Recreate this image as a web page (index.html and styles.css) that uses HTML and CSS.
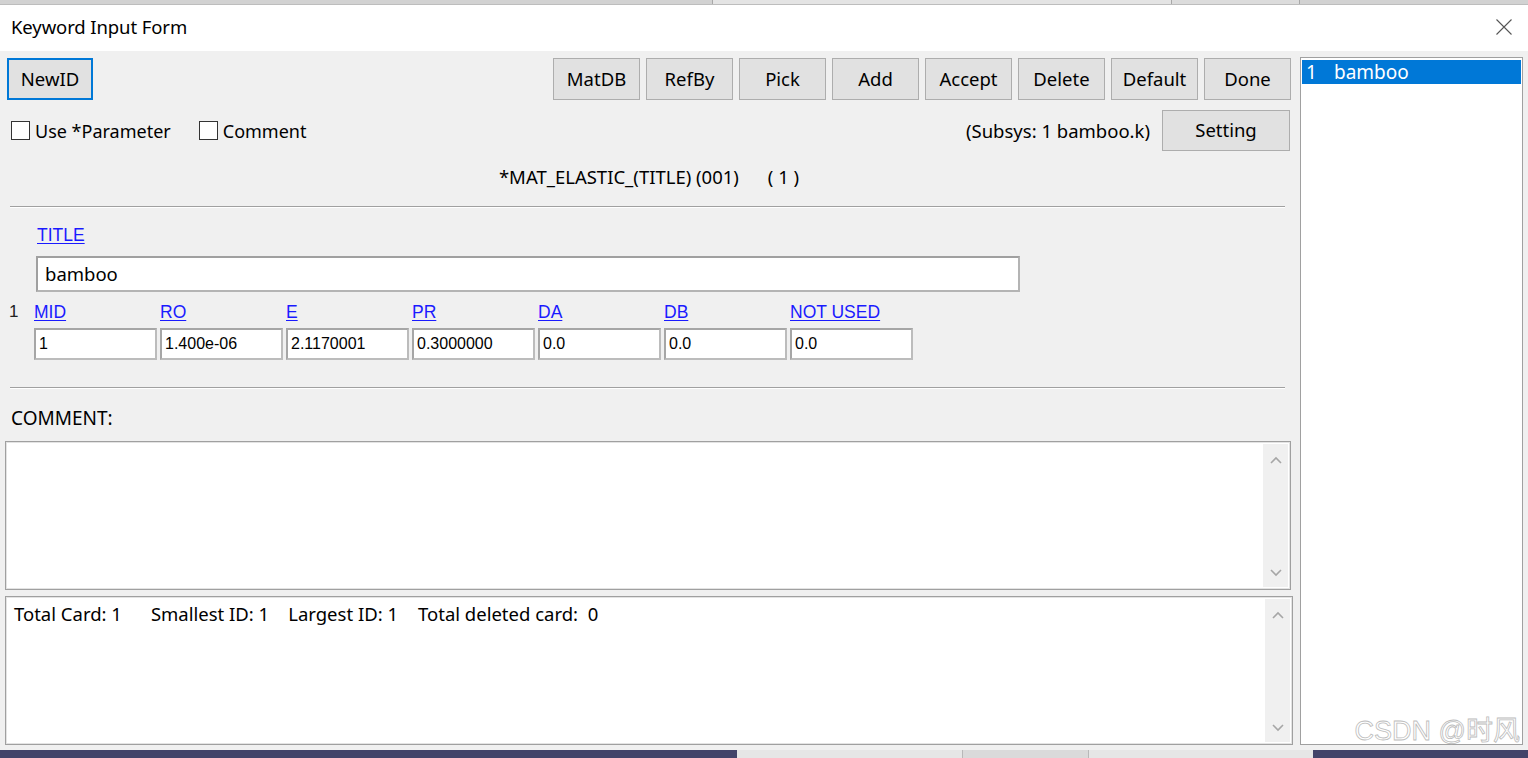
FILE: index.html
```html
<!DOCTYPE html>
<html lang="en">
<head>
  <meta charset="UTF-8" />
  <title>Keyword Input Form</title>
  <link rel="stylesheet" href="styles.css">
</head>
<body>
  <div class="desk-strip">
    <div class="strip-a"></div>
    <div class="strip-combo"></div>
    <div class="strip-btn"></div>
    <div class="strip-c"></div>
  </div>

  <div class="dialog">
    <div class="titlebar">
      <span class="title">Keyword Input Form</span>
      <svg class="close" width="16" height="16" viewBox="0 0 16 16">
        <path d="M0.5 0.5 L15.5 15.5 M15.5 0.5 L0.5 15.5" stroke="#555" stroke-width="1.1" fill="none" />
      </svg>
    </div>

    <div class="client">
      <div class="form">
        <div class="toolbar">
          <button class="btn btn-focus">NewID</button>
          <div class="btn-group">
            <button class="btn">MatDB</button>
            <button class="btn">RefBy</button>
            <button class="btn">Pick</button>
            <button class="btn">Add</button>
            <button class="btn">Accept</button>
            <button class="btn">Delete</button>
            <button class="btn">Default</button>
            <button class="btn">Done</button>
          </div>
        </div>

        <div class="options">
          <label class="check"><span class="box"></span>Use *Parameter</label>
          <label class="check check-2"><span class="box"></span>Comment</label>
          <span class="subsys">(Subsys: 1 bamboo.k)</span>
          <button class="btn btn-setting">Setting</button>
        </div>

        <div class="kw-head">*MAT_ELASTIC_(TITLE) (001)&nbsp;&nbsp;&nbsp;&nbsp;&nbsp; ( 1 )</div>

        <div class="sep"></div>

        <a class="field-link title-link" href="#">TITLE</a>
        <div class="title-input">bamboo</div>

        <div class="card-row">
          <span class="card-no">1</span>
          <div class="card-grid">
            <div class="cell"><a class="field-link" href="#">MID</a><div class="val">1</div></div>
            <div class="cell"><a class="field-link" href="#">RO</a><div class="val">1.400e-06</div></div>
            <div class="cell"><a class="field-link" href="#">E</a><div class="val">2.1170001</div></div>
            <div class="cell"><a class="field-link" href="#">PR</a><div class="val">0.3000000</div></div>
            <div class="cell"><a class="field-link" href="#">DA</a><div class="val">0.0</div></div>
            <div class="cell"><a class="field-link" href="#">DB</a><div class="val">0.0</div></div>
            <div class="cell"><a class="field-link" href="#">NOT USED</a><div class="val">0.0</div></div>
          </div>
        </div>

        <div class="sep sep-2"></div>

        <div class="comment-label">COMMENT:</div>

        <div class="textbox comment-box">
          <div class="textbox-body"></div>
          <div class="vscroll">
            <svg width="12" height="8" viewBox="0 0 12 8"><polyline points="1,7 6,2 11,7" fill="none" stroke="#a6a6a6" stroke-width="1.6" /></svg>
            <svg width="12" height="8" viewBox="0 0 12 8"><polyline points="1,1 6,6 11,1" fill="none" stroke="#a6a6a6" stroke-width="1.6" /></svg>
          </div>
        </div>

        <div class="textbox status-box">
          <div class="textbox-body status-text"><span class="st st-1">Total Card: 1</span><span class="st st-2">Smallest ID: 1</span><span class="st st-3">Largest ID: 1</span><span class="st st-4">Total deleted card:&nbsp; 0</span></div>
          <div class="vscroll">
            <svg width="12" height="8" viewBox="0 0 12 8"><polyline points="1,7 6,2 11,7" fill="none" stroke="#a6a6a6" stroke-width="1.6" /></svg>
            <svg width="12" height="8" viewBox="0 0 12 8"><polyline points="1,1 6,6 11,1" fill="none" stroke="#a6a6a6" stroke-width="1.6" /></svg>
          </div>
        </div>
      </div>

      <div class="id-list">
        <div class="id-row selected"><span class="id-no">1</span><span>bamboo</span></div>
      </div>
    </div>
  </div>

  <div class="taskbar">
    <div class="task-dark task-left"></div>
    <div class="task-light">
      <div class="task-btn"></div>
    </div>
    <div class="task-dark task-right"></div>
  </div>

  <div class="watermark">CSDN @时风</div>
</body>
</html>
```

FILE: styles.css
```css
:root {
  --face: #f0f0f0;
  --btn-face: #e1e1e1;
  --btn-border: #adadad;
  --focus-blue: #0078d7;
  --link-blue: #1a1aff;
  --ui-font: "Noto Sans", "Open Sans", sans-serif;
  --field-font: "Liberation Sans", Arial, sans-serif;
}

* {
  box-sizing: border-box;
  margin: 0;
  padding: 0;
}

html, body {
  width: 1528px;
  height: 758px;
  overflow: hidden;
}

body {
  position: relative;
  font-family: var(--ui-font);
  color: #000;
  background: var(--face);
}

/* window behind the dialog, only a few px visible */
.desk-strip {
  height: 5px;
  display: flex;
  background: #d2d2d2;
  border-bottom: 1px solid #bdbdbd;
}

.strip-a { width: 712px; }
.strip-combo { width: 460px; background: #e4e4e4; border-left: 1px solid #a8a8a8; border-right: 1px solid #a8a8a8; }
.strip-btn { width: 128px; background: #dcdcdc; border-right: 1px solid #a8a8a8; }
.strip-c { flex: 1; }

.dialog {
  display: flex;
  flex-direction: column;
}

.titlebar {
  height: 46px;
  background: #fff;
  display: flex;
  align-items: center;
  justify-content: space-between;
  padding: 0 16px 4px 11px;
}

.title {
  font-size: 18.5px;
  letter-spacing: -0.1px;
}

.close {
  margin-top: 1px;
}

.client {
  height: 699px;
  display: flex;
  gap: 7px;
  padding: 6px 5px 5px 5px;
  background: var(--face);
}

.form {
  width: 1288px;
  display: flex;
  flex-direction: column;
}

.btn {
  font-family: var(--ui-font);
  font-size: 18.5px;
  color: #000;
  background: var(--btn-face);
  border: 1px solid var(--btn-border);
  height: 42px;
  width: 87px;
  padding: 0 0 2px;
}

.toolbar {
  margin-top: 1px;
  display: flex;
  justify-content: space-between;
  padding: 0 2px;
}

.btn-focus {
  width: 86px;
  border: 2px solid var(--focus-blue);
}

.btn-group {
  display: flex;
  gap: 6px;
}

.options {
  margin-top: 10px;
  height: 41px;
  display: flex;
  align-items: center;
  padding: 0 3px 0 6px;
}

.check {
  display: flex;
  align-items: center;
  gap: 5px;
  font-size: 18px;
}

.check-2 {
  margin-left: 28px;
}

.box {
  width: 19px;
  height: 19px;
  background: #fff;
  border: 1px solid #333;
}

.subsys {
  margin-left: auto;
  margin-right: 12px;
  font-size: 18.5px;
}

.btn-setting {
  width: 128px;
  height: 41px;
}

.kw-head {
  margin-top: 14px;
  line-height: 24px;
  font-size: 18.5px;
  text-align: center;
}

.sep {
  margin: 17px 8px 0 5px;
  height: 2px;
  border-top: 1px solid #a0a0a0;
  border-bottom: 1px solid #fff;
}

.sep-2 {
  margin-top: 27px;
}

.field-link {
  font-family: var(--field-font);
  font-size: 17.5px;
  line-height: 20px;
  color: var(--link-blue);
  text-decoration: underline;
  text-underline-offset: 2px;
}

.title-link {
  margin: 17px 0 0 32px;
  align-self: flex-start;
}

.title-input {
  margin: 11px 0 0 31px;
  width: 984px;
  height: 36px;
  background: #fff;
  border: 2px solid #a0a0a0;
  border-right-color: #b4b4b4;
  border-bottom-color: #b4b4b4;
  padding: 0 0 0 7px;
  font-size: 18.5px;
  line-height: 31px;
}

.card-row {
  margin-top: 10px;
  display: flex;
}

.card-no {
  width: 29px;
  padding-left: 4px;
  font-family: var(--field-font);
  font-size: 17px;
  line-height: 20px;
  color: #222;
}

.card-grid {
  display: flex;
  gap: 3px;
}

.cell {
  width: 123px;
  display: flex;
  flex-direction: column;
  align-items: flex-start;
}

.val {
  margin-top: 6px;
  width: 123px;
  height: 32px;
  background: #fff;
  border: 2px solid #a6a6a6;
  border-right-color: #bcbcbc;
  border-bottom-color: #bcbcbc;
  padding-left: 3px;
  font-family: var(--field-font);
  font-size: 16px;
  line-height: 28px;
}

.comment-label {
  margin: 17px 0 0 6px;
  font-size: 19px;
  line-height: 24px;
}

.textbox {
  height: 149px;
  display: flex;
  background: #fff;
  border: 1px solid #a0a0a0;
  box-shadow: inset 0 0 0 1px #e3e3e3;
}

.comment-box {
  margin-top: 11px;
  width: 1286px;
}

.status-box {
  margin-top: 6px;
  width: 1288px;
}

.textbox-body {
  flex: 1;
}

.status-text {
  padding: 5px 0 0 8px;
  font-size: 18.5px;
  line-height: 24px;
  white-space: nowrap;
}

.st-2 { margin-left: 29px; }
.st-3 { margin-left: 19px; }
.st-4 { margin-left: 20px; }

.vscroll {
  width: 25px;
  margin: 2px 2px 2px 0;
  background: #f0f0f0;
  display: flex;
  flex-direction: column;
  align-items: center;
  justify-content: space-between;
  padding: 12px 0 10px;
}

.id-list {
  flex: 1;
  height: 688px;
  background: #fff;
  border: 1px solid #a0a0a0;
  padding: 2px 1px;
}

.id-row {
  height: 24px;
  display: flex;
  align-items: center;
  font-size: 19px;
  padding-left: 4px;
}

.id-row.selected {
  background: var(--focus-blue);
  color: #fff;
}

.id-no {
  width: 28px;
}

.taskbar {
  height: 8px;
  display: flex;
}

.task-dark {
  background: #434369;
}

.task-left { width: 737px; }
.task-right { flex: 1; }

.task-light {
  width: 576px;
  background: #e6e6e6;
  padding-left: 225px;
}

.task-btn {
  width: 127px;
  height: 8px;
  background: #dadada;
  border-left: 1px solid #b8b8b8;
  border-right: 1px solid #b8b8b8;
}

.watermark {
  position: absolute;
  right: 8px;
  bottom: 12px;
  font-family: "Liberation Sans", "Noto Sans CJK SC", sans-serif;
  font-size: 27px;
  line-height: 30px;
  color: rgba(255, 255, 255, 0.9);
  -webkit-text-stroke: 0.8px #bcbcbc;
}
```
